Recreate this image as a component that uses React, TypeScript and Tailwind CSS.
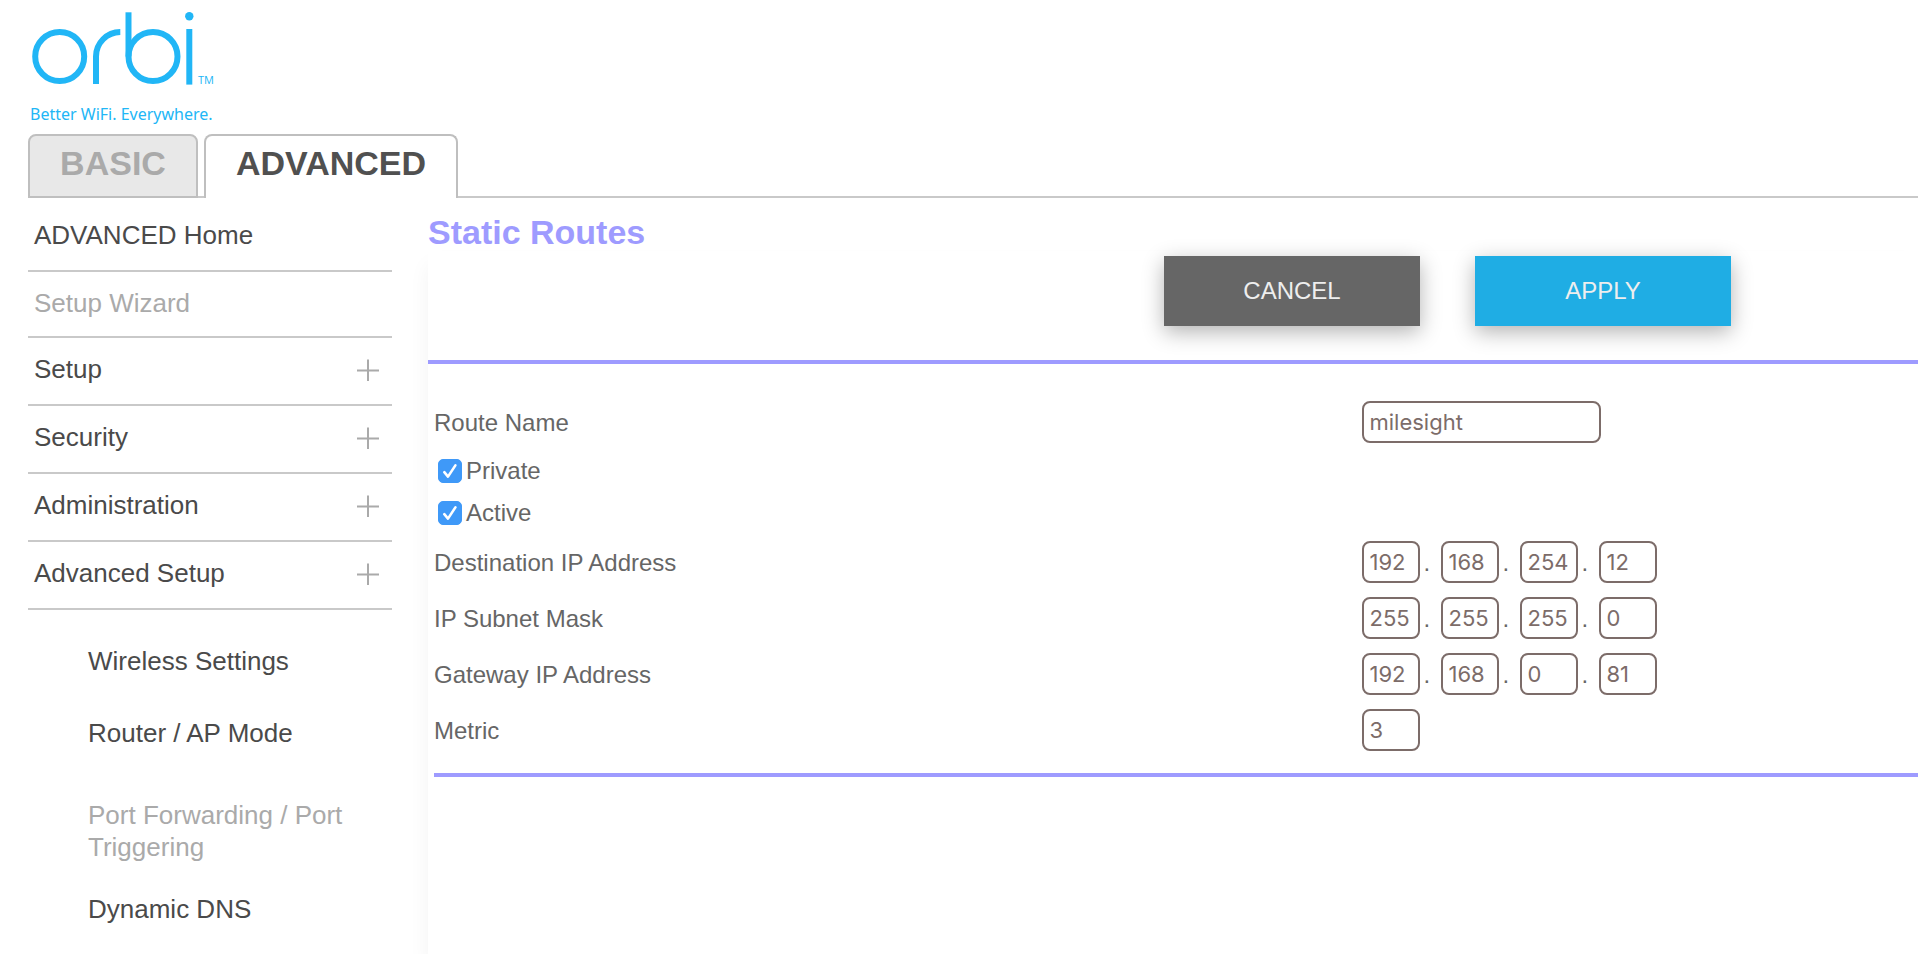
import { useState } from "react";

type MenuItem = {
    label: string;
    className: string;
    disabled?: boolean;
    expandable?: boolean;
};

const menu: MenuItem[] = [
    { label: "ADVANCED Home", className: "pt-[22px] pb-5" },
    { label: "Setup Wizard", className: "pt-4 pb-[18px]", disabled: true },
    { label: "Setup", className: "pt-4 pb-5", expandable: true },
    { label: "Security", className: "pt-4 pb-5", expandable: true },
    { label: "Administration", className: "pt-4 pb-5", expandable: true },
    { label: "Advanced Setup", className: "pt-4 pb-5", expandable: true },
];

const submenu: MenuItem[] = [
    { label: "Wireless Settings", className: "py-5" },
    { label: "Router / AP Mode", className: "py-5" },
    {
        label: "Port Forwarding / Port Triggering",
        className: "pt-[30px] pb-[10px]",
        disabled: true,
    },
    { label: "Dynamic DNS", className: "py-5" },
];

const addresses = [
    { label: "Destination IP Address", name: "dest", value: ["192", "168", "254", "12"] },
    { label: "IP Subnet Mask", name: "mask", value: ["255", "255", "255", "0"] },
    { label: "Gateway IP Address", name: "gateway", value: ["192", "168", "0", "81"] },
];

const inputClass =
    "h-[42px] rounded-lg border-2 border-[#7c6c69] bg-white px-1.5 font-['Inter',sans-serif] text-[22px] text-[#7c6c69] outline-none";

const buttonClass = "h-[70px] w-64 shadow-[0_6px_20px_rgba(0,0,0,0.3)]";

function Logo() {
    return (
        <svg
            className="h-[76px] w-[188px]"
            viewBox="28 10 188 76"
            fill="none"
            stroke="#21b6f6"
            strokeWidth="6"
            role="img"
            aria-label="orbi"
        >
            <circle cx="59.7" cy="56.5" r="24.5" />
            <path d="M96 84V56.5A24.5 24.5 0 0 1 120.3 32" />
            <path d="M128.5 12.3V56.5" />
            <circle cx="153" cy="56.5" r="24.5" />
            <path d="M189.3 29V84.6" />
            <circle cx="189.3" cy="16.3" r="4.2" fill="#21b6f6" stroke="none" />
            <text
                x="198"
                y="84"
                fill="#21b6f6"
                stroke="none"
                className="font-['Open_Sans',sans-serif] text-[11px]"
            >
                TM
            </text>
        </svg>
    );
}

function PlusIcon() {
    return (
        <svg
            className="h-6 w-[22px]"
            viewBox="0 0 22 24"
            stroke="#aaaaaa"
            strokeWidth="2"
            aria-hidden="true"
        >
            <path d="M0 13.5H22M11 2.5V24" />
        </svg>
    );
}

function Checkbox({ id, label }: { id: string; label: string }) {
    const [checked, setChecked] = useState(true);

    return (
        <div className="flex h-[42px] items-center pl-1">
            <span className="grid h-6 w-6">
                <input
                    id={id}
                    type="checkbox"
                    checked={checked}
                    onChange={(e) => setChecked(e.target.checked)}
                    className="col-start-1 row-start-1 h-6 w-6 appearance-none rounded-[5px] border border-gray-300 checked:border-[#3f99f8] checked:bg-[#3f99f8]"
                />
                {checked && (
                    <svg
                        className="pointer-events-none col-start-1 row-start-1 h-6 w-6"
                        viewBox="0 0 24 24"
                        fill="none"
                        stroke="white"
                        strokeWidth="2.6"
                        strokeLinecap="round"
                        strokeLinejoin="round"
                    >
                        <path d="M6.3 13.2L10 17.6L17.4 6.4" />
                    </svg>
                )}
            </span>
            <label htmlFor={id} className="pl-1">
                {label}
            </label>
        </div>
    );
}

export default function App() {
    return (
        <div className="flex min-h-screen flex-col bg-white font-['Liberation_Sans',Arial,sans-serif] text-[#4a4a4a]">
            <header>
                <div className="flex h-[134px] flex-col gap-4 pt-2.5 pl-7">
                    <Logo />
                    <p className="pl-0.5 font-['Noto_Sans',sans-serif] text-base leading-6 text-[#21b6f6]">
                        Better WiFi. Everywhere.
                    </p>
                </div>
                <nav className="flex text-[34px] leading-[38px] font-bold">
                    <div className="w-7" />
                    <a
                        href="#basic"
                        className="h-16 w-[170px] rounded-t-lg border-2 border-[#bfbfbf] bg-[#e8e8e8] pt-2 text-center text-[#aaaaaa]"
                    >
                        BASIC
                    </a>
                    <div className="w-1.5 border-b-2 border-[#c9c9c9]" />
                    <a
                        href="#advanced"
                        className="h-16 w-[254px] rounded-t-lg border-2 border-b-0 border-[#bfbfbf] pt-2 text-center text-[#505050]"
                    >
                        ADVANCED
                    </a>
                    <div className="flex-1 border-b-2 border-[#c9c9c9]" />
                </nav>
            </header>

            <div className="flex flex-1">
                <aside className="w-[428px] shrink-0 pr-9 pl-7 text-[26px]">
                    <ul className="leading-[30px]">
                        {menu.map((item) => (
                            <li key={item.label} className="border-b-2 border-[#c9c9c9]">
                                <a
                                    href="#"
                                    className={`flex items-center justify-between pr-[13px] pl-1.5 ${item.className} ${
                                        item.disabled ? "text-[#aaaaaa]" : ""
                                    }`}
                                >
                                    {item.label}
                                    {item.expandable && <PlusIcon />}
                                </a>
                            </li>
                        ))}
                    </ul>
                    <ul className="pt-[15px] pl-[60px] leading-8">
                        {submenu.map((item) => (
                            <li key={item.label}>
                                <a
                                    href="#"
                                    className={`block ${item.className} ${
                                        item.disabled ? "text-[#aaaaaa]" : ""
                                    }`}
                                >
                                    {item.label}
                                </a>
                            </li>
                        ))}
                    </ul>
                </aside>

                <main className="flex min-w-0 flex-1 flex-col text-2xl text-[#666666]">
                    <h1 className="pt-[15px] text-[34px] leading-[38px] font-bold text-[#9e9bff]">
                        Static Routes
                    </h1>
                    <form
                        className="flex-1 shadow-[0_14px_20px_rgba(0,0,0,0.05)]"
                        onSubmit={(e) => e.preventDefault()}
                    >
                        <div className="flex justify-end gap-[55px] border-b-4 border-[#9e9bff] pt-[5px] pr-[187px] pb-[34px] text-[#eeeeee]">
                            <button type="button" className={`bg-[#666666] ${buttonClass}`}>
                                CANCEL
                            </button>
                            <button type="submit" className={`bg-[#1fade4] ${buttonClass}`}>
                                APPLY
                            </button>
                        </div>

                        <div className="pt-[30px] pl-1.5">
                            <div className="grid h-14 grid-cols-[5fr_3fr] items-center">
                                <label htmlFor="name" className="pt-0.5">
                                    Route Name
                                </label>
                                <input
                                    id="name"
                                    defaultValue="milesight"
                                    className={`w-[239px] ${inputClass}`}
                                />
                            </div>
                            <Checkbox id="private" label="Private" />
                            <Checkbox id="active" label="Active" />
                            {addresses.map((row) => (
                                <div
                                    key={row.name}
                                    className="grid h-14 grid-cols-[5fr_3fr] items-center"
                                >
                                    <label htmlFor={`${row.name}0`} className="pt-0.5">
                                        {row.label}
                                    </label>
                                    <div className="flex items-center">
                                        {row.value.map((octet, i) => (
                                            <div key={i} className="flex items-center">
                                                {i > 0 && (
                                                    <span className="w-[21px] pt-0.5 pl-1">.</span>
                                                )}
                                                <input
                                                    id={`${row.name}${i}`}
                                                    aria-label={`${row.label} ${i + 1}`}
                                                    defaultValue={octet}
                                                    className={`w-[58px] ${inputClass}`}
                                                />
                                            </div>
                                        ))}
                                    </div>
                                </div>
                            ))}
                            <div className="grid h-14 grid-cols-[5fr_3fr] items-center">
                                <label htmlFor="metric" className="pt-0.5">
                                    Metric
                                </label>
                                <input
                                    id="metric"
                                    defaultValue="3"
                                    className={`w-[58px] ${inputClass}`}
                                />
                            </div>
                            <div className="mt-[15px] border-b-4 border-[#9e9bff]" />
                        </div>
                    </form>
                </main>
            </div>
        </div>
    );
}
